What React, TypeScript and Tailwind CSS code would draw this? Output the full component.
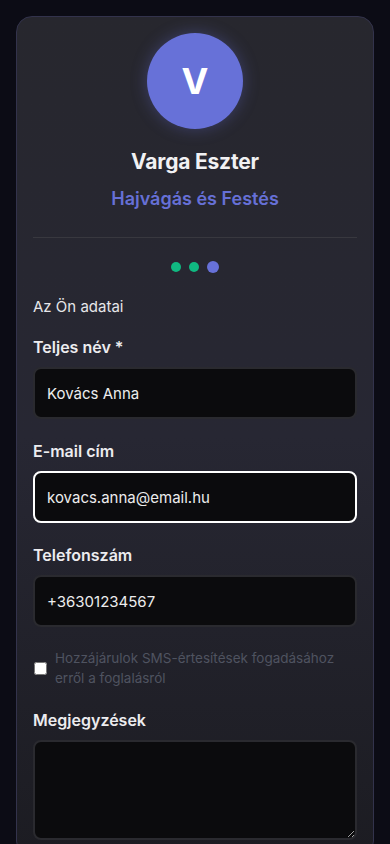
import { useState } from 'react';

const font = { fontFamily: 'Inter, "Noto Sans", sans-serif' };

// Step indicator dots
function Steps() {
  return (
    <div className="flex items-center justify-center gap-2 mt-[23px] mb-[22px]">
      <span className="w-[10px] h-[10px] rounded-full bg-[#10b981]" />
      <span className="w-[10px] h-[10px] rounded-full bg-[#10b981]" />
      <span className="w-3 h-3 rounded-full bg-[#6771d8]" />
    </div>
  );
}

interface FieldProps {
  label: string;
  value: string;
  focused?: boolean;
  onChange: (v: string) => void;
}

function Field({ label, value, focused = false, onChange }: FieldProps) {
  return (
    <div className="mb-5">
      <label className="block text-base font-semibold text-[#ececef] mb-2 leading-6">{label}</label>
      <input
        value={value}
        onChange={(e) => onChange(e.target.value)}
        className={`w-full h-[52px] rounded-lg bg-[#0b0b0d] px-3 text-[15px] text-[#ededed] outline-none border-2 ${
          focused ? 'border-white' : 'border-[#2a2a2f]'
        }`}
      />
    </div>
  );
}

export default function App() {
  const [name, setName] = useState('Kovács Anna');
  const [email, setEmail] = useState('kovacs.anna@email.hu');
  const [phone, setPhone] = useState('+36301234567');

  return (
    <div className="min-h-screen bg-[#0c0c15] px-4 pt-4 pb-6" style={font}>
      <div className="rounded-2xl border border-[#33334c] bg-gradient-to-b from-[#27272e] via-[#272733] to-[#1c1c22] p-4">
        {/* Header */}
        <div className="flex flex-col items-center border-b border-[#38383f] pb-6">
          <div className="w-24 h-24 rounded-full bg-[#6771d8] flex items-center justify-center shadow-[0_0_16px_rgba(103,113,216,0.35)]">
            <span className="text-[36px] font-bold text-white leading-none">V</span>
          </div>
          <h2 className="mt-[19px] text-[21px] font-bold text-[#f1f1f3] leading-7 tracking-[-0.2px]">Varga Eszter</h2>
          <p className="mt-[9px] text-lg font-semibold text-[#6670d6] leading-7">Hajvágás és Festés</p>
        </div>

        <Steps />

        <h3 className="text-[15px] text-[#e6e6e9] leading-6 mb-4">Az Ön adatai</h3>

        <Field label="Teljes név *" value={name} onChange={setName} />
        <Field label="E-mail cím" value={email} focused onChange={setEmail} />
        <Field label="Telefonszám" value={phone} onChange={setPhone} />

        {/* SMS consent */}
        <label className="flex items-center gap-2 mt-[21px] mb-5">
          <input type="checkbox" className="w-[13px] h-[13px] ml-[1px] shrink-0" />
          <span className="text-[13.5px] leading-5 text-[#4f5360]">
            Hozzájárulok SMS-értesítések fogadásához erről a foglalásról
          </span>
        </label>

        <div>
          <label className="block text-base font-semibold text-[#ececef] mb-2 leading-6">Megjegyzések</label>
          <textarea className="block w-full h-[100px] rounded-lg bg-[#0b0b0d] px-3 py-3 text-[15px] text-[#ededed] outline-none border-2 border-[#2a2a2f]" />
        </div>
      </div>
    </div>
  );
}
